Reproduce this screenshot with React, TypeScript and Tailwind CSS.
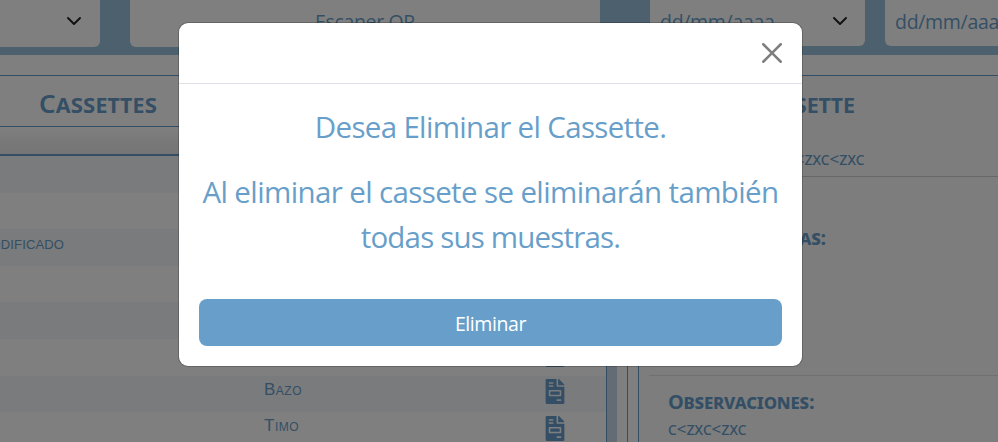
import type { ReactNode } from 'react';
import { FaFileInvoice } from 'react-icons/fa';

const smallCaps = 'whitespace-nowrap [font-variant:small-caps]';

function Chevron() {
  return (
    <svg viewBox="0 0 16 16" className="size-4 shrink-0" fill="none" stroke="#212529" strokeWidth="2" strokeLinecap="round" strokeLinejoin="round">
      <path d="m2 5 6 6 6-6" />
    </svg>
  );
}

function Toolbar() {
  return (
    <header className="flex h-[55px] shrink-0 items-start bg-[#98c0da] text-[19.5px]">
      <div className="flex h-[46.5px] w-[100px] shrink-0 items-start justify-end rounded-br-md bg-white pt-[13px] pr-[18px]">
        <Chevron />
      </div>
      <div className="ml-[30px] flex h-[47px] w-[470px] shrink-0 justify-center rounded-b-md bg-white leading-[44px] tracking-[-0.35px]">
        Escaner QR
      </div>
      <div className="ml-[50px] flex h-[46px] w-[215px] shrink-0 justify-between rounded-b-md bg-white pr-[17px] pl-[10px]">
        <span className="leading-[44px] tracking-[-0.3px]">dd/mm/aaaa</span>
        <span className="pt-[13px]">
          <Chevron />
        </span>
      </div>
      <div className="ml-[20px] h-[46px] w-[215px] shrink-0 rounded-bl-md bg-white pl-[10px] leading-[44px] tracking-[-0.3px]">
        dd/mm/aaaa
      </div>
    </header>
  );
}

function Row({ striped, name, organ, icon }: { striped?: boolean; name?: string; organ?: string; icon?: boolean }) {
  return (
    <div className={`flex h-[36.6px] shrink-0 font-['Liberation_Sans',sans-serif] ${striped ? 'bg-[#f4f6f9]' : 'bg-white'}`}>
      <div className="w-[264px] shrink-0">
        {name && <div className={`-ml-[25px] text-[18.5px] leading-[28px] tracking-[0.15px] ${smallCaps}`}>{name}</div>}
      </div>
      <div className={`w-[281px] shrink-0 text-[17px] leading-[28px] tracking-[0.5px] ${smallCaps}`}>{organ}</div>
      {icon && <FaFileInvoice className="mt-[3.4px] h-[25px] w-[20px] text-[#689fca]" />}
    </div>
  );
}

function CassetteTable() {
  return (
    <section className="flex w-[628px] shrink-0 flex-col border-t border-r border-[#689fca] bg-white">
      <h2 className={`h-[51px] shrink-0 border-b border-[#689fca] pl-[39px] font-['Noto_Sans',sans-serif] text-[26px] leading-[55px] font-semibold tracking-[0.2px] ${smallCaps}`}>
        Cassettes
      </h2>
      <div className="flex min-h-0 flex-1">
        <div className="flex w-[606px] flex-col overflow-hidden">
          <div className="h-[27px] shrink-0 bg-linear-to-b from-white via-[#f0f0f0] via-60% to-[#ebebeb]" />
          <div className="h-[2px] shrink-0 bg-[#689fca]" />
          <Row striped />
          <Row />
          <Row striped name="Modificado" />
          <Row />
          <Row striped />
          <Row icon />
          <Row striped organ="Bazo" icon />
          <Row organ="Timo" icon />
        </div>
        <div className="w-[11px] border-l border-[#689fca] bg-[#c6d6e8]" />
      </div>
    </section>
  );
}

function Label({ children, className }: { children: ReactNode; className: string }) {
  return (
    <div className={`shrink-0 font-['Noto_Sans',sans-serif] ${smallCaps} ${className}`}>{children}</div>
  );
}

function CassetteDetail() {
  return (
    <section className="ml-[10px] flex min-w-0 flex-1 flex-col border-t border-l border-[#689fca] bg-[#fbfbfb]">
      <Label className="h-[64px] w-[216px] text-right text-[26px] leading-[55px] font-semibold">Cassette</Label>
      <Label className="h-[36px] w-[225.5px] text-right text-[17px] leading-[38px]">c&lt;zxc&lt;zxc</Label>
      <div className="ml-[10px] h-[200px] shrink-0 border-t border-b border-t-[#cfcfcf] border-b-[#e0e0e0]">
        <Label className="w-[177px] pt-[46px] text-right text-[20px] leading-[30px] font-bold tracking-[-0.2px]">Muestras:</Label>
      </div>
      <Label className="ml-[29px] text-[20px] leading-[52px] font-bold tracking-[-0.2px]">Observaciones:</Label>
      <Label className="-mt-[2px] ml-[29px] text-[17px] leading-[5px]">c&lt;zxc&lt;zxc</Label>
    </section>
  );
}

function ConfirmModal() {
  return (
    <div className="absolute inset-0 bg-black/50" role="dialog" aria-modal="true">
      <div className="mt-[22px] ml-[178px] flex h-[345px] w-[625px] flex-col rounded-[10px] border border-black/20 bg-white bg-clip-padding">
        <div className="flex h-[61px] shrink-0 justify-end border-b border-[#dee2e6] pt-5 pr-5">
          <button aria-label="Cerrar" className="size-5 opacity-50">
            <svg viewBox="0 0 16 16" className="size-5" fill="#000">
              <path d="M.293.293a1 1 0 0 1 1.414 0L8 6.586 14.293.293a1 1 0 1 1 1.414 1.414L9.414 8l6.293 6.293a1 1 0 0 1-1.414 1.414L8 9.414l-6.293 6.293a1 1 0 0 1-1.414-1.414L6.586 8 .293 1.707a1 1 0 0 1 0-1.414z" />
            </svg>
          </button>
        </div>
        <div className="flex flex-1 flex-col px-5 pt-5 text-center text-[29.5px] leading-[45px]">
          <p className="tracking-[-0.67px]">Desea Eliminar el Cassette.</p>
          <p className="mt-5 whitespace-nowrap tracking-[-0.62px]">
            Al eliminar el cassete se eliminarán también
            <br />
            <span className="tracking-[-0.82px]">todas sus muestras.</span>
          </p>
        </div>
        <button className="mx-5 mb-5 h-[47px] shrink-0 rounded-lg bg-[#689fca] text-[19.5px] leading-[50px] tracking-[-0.4px] text-white">
          Eliminar
        </button>
      </div>
    </div>
  );
}

export default function App() {
  return (
    <div className="relative flex h-[442px] w-[998px] flex-col overflow-hidden bg-white font-['Open_Sans',sans-serif] text-[#689fca]">
      <Toolbar />
      <main className="mt-5 flex min-h-0 flex-1">
        <CassetteTable />
        <CassetteDetail />
      </main>
      <ConfirmModal />
    </div>
  );
}
